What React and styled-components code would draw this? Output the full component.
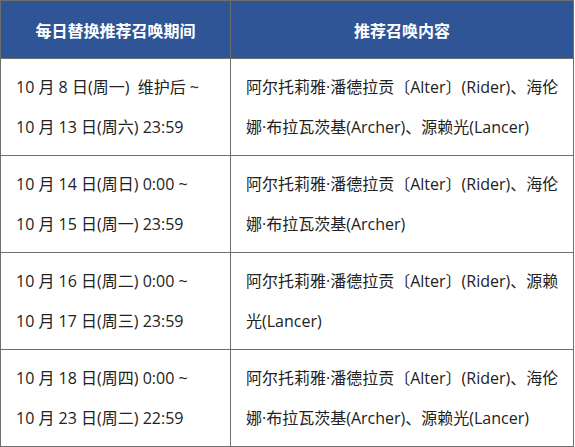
import React from 'react';
import styled, { createGlobalStyle } from 'styled-components';

const GlobalStyle = createGlobalStyle`
  html, body {
    margin: 0;
    padding: 0;
    background: #fff;
  }
  body {
    font-family: "Open Sans", "Noto Sans CJK SC", sans-serif;
  }
`;

const rows = [
  {
    time: ['10 月 8 日(周一)  维护后 ~', '10 月 13 日(周六) 23:59'],
    content: ['阿尔托莉雅·潘德拉贡〔Alter〕(Rider)、海伦', '娜·布拉瓦茨基(Archer)、源赖光(Lancer)'],
  },
  {
    time: ['10 月 14 日(周日) 0:00 ~', '10 月 15 日(周一) 23:59'],
    content: ['阿尔托莉雅·潘德拉贡〔Alter〕(Rider)、海伦', '娜·布拉瓦茨基(Archer)'],
  },
  {
    time: ['10 月 16 日(周二) 0:00 ~', '10 月 17 日(周三) 23:59'],
    content: ['阿尔托莉雅·潘德拉贡〔Alter〕(Rider)、源赖', '光(Lancer)'],
  },
  {
    time: ['10 月 18 日(周四) 0:00 ~', '10 月 23 日(周二) 22:59'],
    content: ['阿尔托莉雅·潘德拉贡〔Alter〕(Rider)、海伦', '娜·布拉瓦茨基(Archer)、源赖光(Lancer)'],
  },
];

const Table = styled.table`
  width: 574px;
  border-collapse: collapse;
  table-layout: fixed;
  font-size: 16px;
  color: #222;
`;

const HeadCell = styled.th`
  height: 57px;
  padding: 0;
  background: #2f5597;
  color: #fff;
  font-weight: bold;
  text-align: center;
  border: 1px solid #6e6e6e;
  width: ${p => p.$width || 'auto'};
`;

const Cell = styled.td`
  height: 96px;
  padding: 0 15px;
  border: 1px solid #6e6e6e;
  vertical-align: middle;
  white-space: pre;
`;

const Line = styled.div`
  line-height: 40px;
`;

export default function App() {
  return (
    <>
      <GlobalStyle />
      <Table>
        <thead>
          <tr>
            <HeadCell $width="229px">每日替换推荐召唤期间</HeadCell>
            <HeadCell>推荐召唤内容</HeadCell>
          </tr>
        </thead>
        <tbody>
          {rows.map((r, i) => (
            <tr key={i}>
              <Cell>
                {r.time.map((t, j) => <Line key={j}>{t}</Line>)}
              </Cell>
              <Cell>
                {r.content.map((t, j) => <Line key={j}>{t}</Line>)}
              </Cell>
            </tr>
          ))}
        </tbody>
      </Table>
    </>
  );
}
